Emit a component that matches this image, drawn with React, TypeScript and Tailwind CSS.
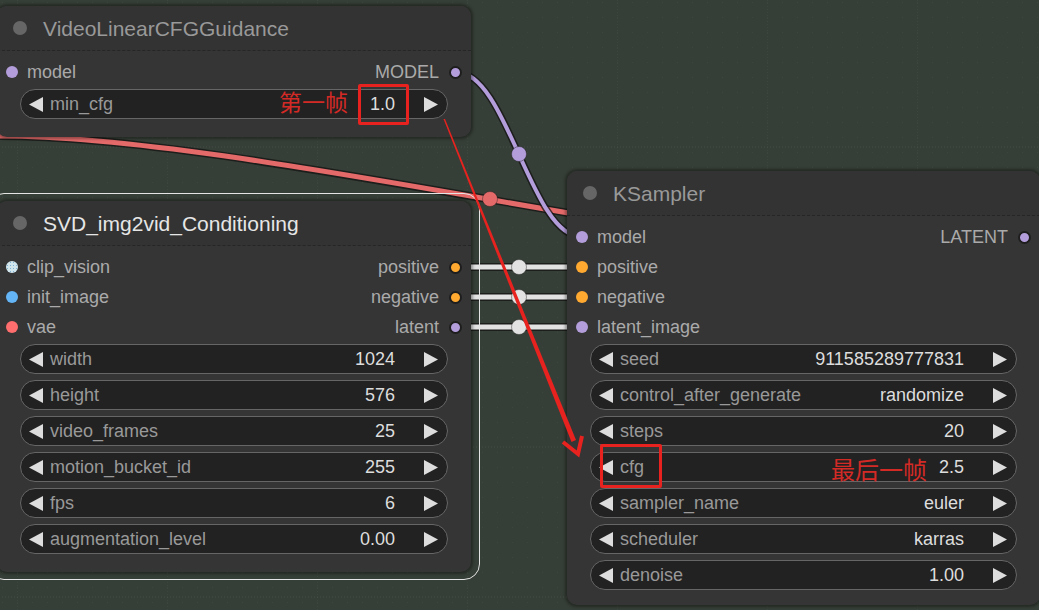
import React from 'react';

const FONT = { fontFamily: '"Liberation Sans", Arial, sans-serif' };
const CJK = { fontFamily: '"Noto Sans CJK SC", "Noto Sans", sans-serif' };

type Slot = { label: string; color: string };

const Tri = ({ dir }: { dir: 'left' | 'right' }) => (
    <svg width="14" height="15" viewBox="0 0 14 15" className="shrink-0">
        {dir === 'left'
            ? <polygon points="14,0 14,15 0,7.5" fill="#dddddd" />
            : <polygon points="0,0 0,15 14,7.5" fill="#dddddd" />}
    </svg>
);

const Widget = ({ label, value }: { label: string; value: string }) => (
    <div className="flex h-[30px] items-center rounded-full border border-[#666] bg-[#222] text-[18px]">
        <div className="ml-[8px]"><Tri dir="left" /></div>
        <span className="ml-[7px] pt-[1px] text-[#999]">{label}</span>
        <span className="ml-auto mr-[29px] pt-[1px] text-[#ddd]">{value}</span>
        <div className="mr-[9px]"><Tri dir="right" /></div>
    </div>
);

const InDot = ({ color, dotted }: { color: string; dotted?: boolean }) => (
    <span
        className={`ml-[9px] h-[12px] w-[12px] shrink-0 rounded-full ${dotted ? 'bg-[radial-gradient(#7fb3d8_1px,transparent_1px)] bg-[length:3px_3px]' : ''}`}
        style={{ backgroundColor: color }}
    />
);

const OutDot = ({ color }: { color: string }) => (
    <span
        className="mr-[9px] h-[13px] w-[13px] shrink-0 rounded-full border-2 border-[#1e1e1e]"
        style={{ backgroundColor: color }}
    />
);

interface NodeProps {
    title: string;
    selected?: boolean;
    inputs: (Slot & { dotted?: boolean })[];
    outputs: Slot[];
    widgets: [string, string][];
    className: string;
    pb?: string;
}

const Node = ({ title, selected, inputs, outputs, widgets, className, pb = 'pb-[18px]' }: NodeProps) => {
    const rows = Math.max(inputs.length, outputs.length);
    return (
        <div className={`absolute ${className}`}>
            {selected && (
                <div className="absolute -top-[8px] -bottom-[8px] -left-[9px] -right-[9px] rounded-[16px] border-[1.5px] border-[#e4e4e4]" />
            )}
            <div className={`relative overflow-hidden rounded-[10px] bg-[#353535] shadow-[0_0_3px_2px_rgba(0,0,0,0.35)] ${pb}`}>
                <div className="flex h-[45px] items-center border-b border-dashed border-[#262626] bg-[#333]">
                    <span className="ml-[16px] h-[14px] w-[14px] rounded-full bg-[#666]" />
                    <span className={`ml-[16px] pt-[2px] text-[21px] ${selected ? 'text-[#e6e6e6]' : 'text-[#999]'}`}>{title}</span>
                </div>
                <div className="pt-[6px] text-[18px] text-[#aaa]">
                    {Array.from({ length: rows }).map((_, i) => (
                        <div key={i} className="flex h-[30px] items-center justify-between">
                            <div className="flex items-center">
                                {inputs[i] && (
                                    <>
                                        <InDot color={inputs[i].color} dotted={inputs[i].dotted} />
                                        <span className="ml-[9px] pt-[1px]">{inputs[i].label}</span>
                                    </>
                                )}
                            </div>
                            <div className="flex items-center">
                                {outputs[i] && (
                                    <>
                                        <span className="mr-[10px] pt-[1px]">{outputs[i].label}</span>
                                        <OutDot color={outputs[i].color} />
                                    </>
                                )}
                            </div>
                        </div>
                    ))}
                </div>
                <div className="mx-[23px] mt-[2px] flex flex-col gap-[6px]">
                    {widgets.map(([l, v]) => <Widget key={l} label={l} value={v} />)}
                </div>
            </div>
        </div>
    );
};

const MODEL = '#b39ddb';
const COND = '#ffa931';
const LATENT = '#b39ddb';

const Wire = ({ d, color, w, mx, my }: { d: string; color: string; w: number; mx: number; my: number }) => (
    <g>
        <path d={d} fill="none" stroke="#141414" strokeOpacity="0.75" strokeWidth={w + 3} />
        <path d={d} fill="none" stroke={color} strokeWidth={w} />
        <circle cx={mx} cy={my} r="7.5" fill={color} stroke="#1a1a1a" strokeOpacity="0.4" strokeWidth="1" />
    </g>
);

export default function App() {
    return (
        <div className="relative h-[610px] w-[1039px] overflow-hidden bg-[#363f37]" style={FONT}>
            <svg className="absolute inset-0" width="1039" height="610">
                <defs>
                    <pattern id="grid" width="150" height="150" patternUnits="userSpaceOnUse" x="17" y="0">
                        <path d="M0 0 V150 M0 147 H150" stroke="#ffffff" strokeOpacity="0.07" strokeWidth="1" strokeDasharray="1 2" fill="none" />
                    </pattern>
                    <pattern id="dots" width="15" height="15" patternUnits="userSpaceOnUse" x="2" y="2">
                        <rect width="1" height="1" fill="#ffffff" fillOpacity="0.035" />
                    </pattern>
                </defs>
                <rect width="1039" height="610" fill="url(#dots)" />
                <rect width="1039" height="610" fill="url(#grid)" />

                <Wire d="M 0 136 C 250 136, 730 263, 980 263" color="#e46a6a" w={5} mx={490} my={199} />
                <Wire d="M 456 72 C 508 72, 530 237, 582 237" color={MODEL} w={4} mx={519} my={154} />
                <Wire d="M 456 267 L 582 267" color="#e2e2e2" w={5} mx={519} my={267} />
                <Wire d="M 456 297 L 582 297" color="#e2e2e2" w={5} mx={519} my={297} />
                <Wire d="M 456 327 L 582 327" color="#e2e2e2" w={5} mx={519} my={327} />
            </svg>

            <Node
                title="VideoLinearCFGGuidance"
                className="left-[-3px] top-[6px] w-[474px]"
                inputs={[{ label: 'model', color: MODEL }]}
                outputs={[{ label: 'MODEL', color: MODEL }]}
                widgets={[['min_cfg', '1.0']]}
            />

            <Node
                title="SVD_img2vid_Conditioning"
                selected
                className="left-[-3px] top-[201px] w-[474px]"
                inputs={[
                    { label: 'clip_vision', color: '#d2e6ee', dotted: true },
                    { label: 'init_image', color: '#64b5f6' },
                    { label: 'vae', color: '#ff6e6e' },
                ]}
                outputs={[
                    { label: 'positive', color: COND },
                    { label: 'negative', color: COND },
                    { label: 'latent', color: LATENT },
                ]}
                widgets={[
                    ['width', '1024'],
                    ['height', '576'],
                    ['video_frames', '25'],
                    ['motion_bucket_id', '255'],
                    ['fps', '6'],
                    ['augmentation_level', '0.00'],
                ]}
            />

            <Node
                title="KSampler"
                className="left-[567px] top-[171px] w-[473px]"
                pb="pb-[15px]"
                inputs={[
                    { label: 'model', color: MODEL },
                    { label: 'positive', color: COND },
                    { label: 'negative', color: COND },
                    { label: 'latent_image', color: LATENT },
                ]}
                outputs={[{ label: 'LATENT', color: LATENT }]}
                widgets={[
                    ['seed', '911585289777831'],
                    ['control_after_generate', 'randomize'],
                    ['steps', '20'],
                    ['cfg', '2.5'],
                    ['sampler_name', 'euler'],
                    ['scheduler', 'karras'],
                    ['denoise', '1.00'],
                ]}
            />

            {/* annotations */}
            <svg className="pointer-events-none absolute inset-0" width="1039" height="610">
                <polygon points="443.5,119 445,119 576,440 571.5,442" fill="#e8231f" />
                <polyline points="563,442 578,454 582,436" fill="none" stroke="#e8231f" strokeWidth="4" />
            </svg>
            <div className="absolute left-[358px] top-[84px] h-[41px] w-[51px] rounded-[2px] border-[3px] border-[#e8231f]" />
            <div className="absolute left-[600px] top-[444px] h-[44px] w-[62px] rounded-[2px] border-[3px] border-[#e8231f]" />
            <div className="absolute left-[279px] top-[86px] text-[23px] leading-[30px] text-[#d42a26]" style={CJK}>第一帧</div>
            <div className="absolute left-[831px] top-[454px] text-[24px] leading-[30px] text-[#d42a26]" style={CJK}>最后一帧</div>
        </div>
    );
}
